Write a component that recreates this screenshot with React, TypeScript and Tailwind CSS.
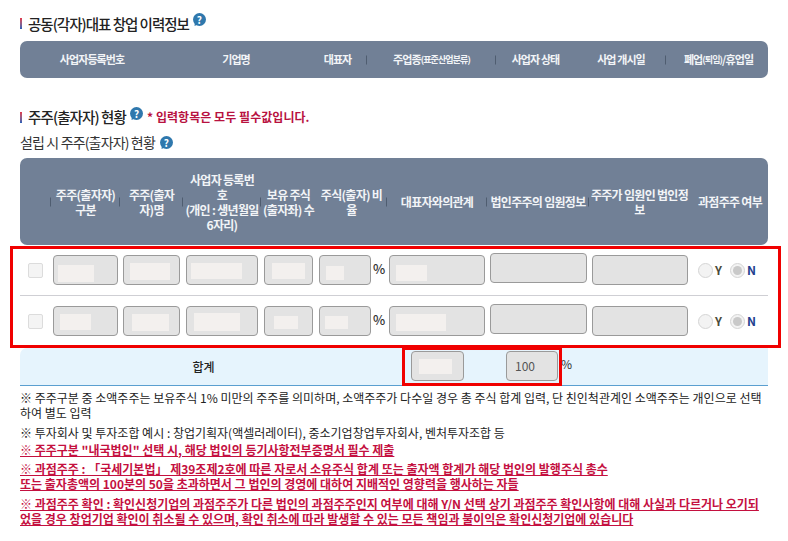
const font = { fontFamily: '"Noto Sans CJK KR", "Noto Sans", sans-serif' };

const HelpIcon = ({ className = "" }: { className?: string }) => (
  <span className={`relative inline-flex shrink-0 items-center justify-center w-[13px] h-[13px] rounded-full bg-[#2f78ad] text-[10px] leading-[13px] font-bold text-white ${className}`}>
    <svg className="absolute left-[1px] top-[8px]" width="5" height="5" viewBox="0 0 5 5">
      <path d="M1 0 L0.5 5 L5 3 Z" fill="#2f78ad" />
    </svg>
    <span className="relative">?</span>
  </span>
);

const TitleBar = () => (
  <span className="w-[2px] h-[11px] mr-[6px] shrink-0 bg-gradient-to-b from-[#e2344a] to-[#1f5fb8]" />
);

const Sep = () => <span className="absolute right-0 top-1/2 -translate-y-1/2 h-[9px] w-px bg-[#4f5d70]" />;

const topCols = [
  { label: "사업자등록번호", pad: "" },
  { label: "기업명", pad: "" },
  { label: "대표자", sep: true, pad: "" },
  { label: "주업종", small: "(표준산업분류)", sep: true, pad: "" },
  { label: "사업자 상태", pad: "pr-[5px]" },
  { label: "사업 개시일", sep: true, pad: "pr-[4px]" },
  { label: "폐업", small: "(퇴임)", rest: "/휴업일", pad: "pl-[1px]" },
];

const midCols: { label: React.ReactNode; sep?: boolean; pad: string }[] = [
  { label: "", sep: true, pad: "" },
  { label: "주주(출자자) 구분", sep: true, pad: "px-[3px]" },
  { label: "주주(출자자)명", sep: true, pad: "px-[3px]" },
  {
    label: (
      <>
        사업자 등록번
        <br />호<br />
        (개인 : 생년월일
        <br />
        6자리)
      </>
    ),
    sep: true,
    pad: "",
  },
  { label: "보유 주식 (출자좌) 수", pad: "" },
  { label: "주식(출자) 비율", sep: true, pad: "px-[3px]" },
  { label: "대표자와의관계", sep: true, pad: "px-[3px]" },
  { label: "법인주주의 임원정보", sep: true, pad: "px-[3px]" },
  {
    label: (
      <>
        주주가 임원인 법인정
        <br />보
      </>
    ),
    pad: "",
  },
  { label: "과점주주 여부", pad: "px-[3px]" },
];

const Box = ({ block, className = "" }: { block?: string; className?: string }) => (
  <div className={`h-[30px] shrink-0 rounded-[4px] border border-[#9a9a9a] bg-[#e3e3e3] flex items-center ${className}`}>
    {block && <span className={`block bg-[#f3f0ee] ${block}`} />}
  </div>
);

const Radio = ({ label, checked }: { label: string; checked?: boolean }) => (
  <span className="flex items-center gap-[2px]">
    <span className="w-[15px] h-[15px] rounded-full border border-[#d5d5d5] bg-[#f3f3f3] flex items-center justify-center">
      {checked && <span className="w-[9px] h-[9px] rounded-full bg-[#c9c9c9]" />}
    </span>
    <span className={`text-[12px] font-bold ${checked ? "text-[#1f3f8f]" : "text-[#4a4a3a]"}`}>{label}</span>
  </span>
);

const Row = ({ blocks }: { blocks: string[] }) => (
  <div className="flex items-start">
    <div className="w-[33px] shrink-0 pl-2 pt-2">
      <span className="block w-[15px] h-[15px] rounded-[2px] border border-[#dcdcdc] bg-[#f4f4f4]" />
    </div>
    <Box block={blocks[0]} className="w-[65px]" />
    <Box block={blocks[1]} className="w-[57px] ml-[5px]" />
    <Box block={blocks[2]} className="w-[72px] ml-[6px]" />
    <Box block={blocks[3]} className="w-[49px] ml-[6px]" />
    <Box block={blocks[4]} className="w-[52px] ml-[6px]" />
    <span className="w-[18px] shrink-0 pl-[2px] text-[13px] font-medium leading-[27px] text-[#333]">%</span>
    <Box block={blocks[5]} className="w-[96px]" />
    <Box className="w-[97px] ml-[5px] -mt-[2px]" />
    <Box className="w-[96px] ml-[5px]" />
    <div className="ml-[10px] flex items-center gap-[8px] h-[30px]">
      <Radio label="Y" />
      <Radio label="N" checked />
    </div>
  </div>
);

const Note = ({ children, className = "" }: { children: React.ReactNode; className?: string }) => (
  <p className={`text-[12px] leading-[15px] text-[#222] ${className}`}>{children}</p>
);

const RedNote = ({ children, className = "" }: { children: React.ReactNode; className?: string }) => (
  <p className={`text-[12px] leading-[15px] font-bold text-[#c4103f] underline ${className}`}>{children}</p>
);

export default function App() {
  return (
    <div className="relative w-[788px] h-[541px] overflow-hidden bg-white px-5 pt-[13px]" style={font}>
      <div className="flex items-center h-[21px]">
        <TitleBar />
        <h2 className="text-[14.5px] tracking-[-1px] font-medium text-[#222]">공동(각자)대표 창업 이력정보</h2>
        <HelpIcon className="ml-1 -mt-2" />
      </div>

      <div className="mt-[7px] h-[37px] rounded-[7px] bg-[#718096] grid grid-cols-[144px_144px_59px_129px_84px_86px_104px] items-center">
        {topCols.map((c) => (
          <div key={c.label} className={`relative h-full flex items-center justify-center text-[11px] font-bold tracking-[-0.9px] text-[#f2f4f7] ${c.pad}`}>
            {c.label}
            {c.small && <span className="text-[9px]">{c.small}</span>}
            {c.rest}
            {c.sep && <Sep />}
          </div>
        ))}
      </div>

      <div className="flex items-center h-[24px] mt-[27px]">
        <TitleBar />
        <h2 className="text-[14.5px] tracking-[-0.9px] font-medium text-[#222]">주주(출자자) 현황</h2>
        <HelpIcon className="ml-1 -mt-2" />
        <span className="ml-[4px] text-[12px] font-bold tracking-[0.05px] text-[#b8123f]">* 입력항목은 모두 필수값입니다.</span>
      </div>

      <div className="flex items-center h-[20px] mt-[3px]">
        <span className="text-[14px] tracking-[-0.85px] text-[#333]">설립 시 주주(출자자) 현황</span>
        <HelpIcon className="ml-[5px]" />
      </div>

      <div className="mt-[6px] h-[87px] rounded-[7px] bg-[#718096] grid grid-cols-[31px_69px_63px_78px_55px_71px_100px_102px_101px_80px] items-center">
        {midCols.map((c, i) => (
          <div key={i} className={`relative h-full flex items-center justify-center text-center text-[12px] leading-[15px] font-bold tracking-[-0.7px] text-[#f2f4f7] whitespace-normal ${c.pad}`}>
            <span>{c.label}</span>
            {c.sep && <Sep />}
          </div>
        ))}
      </div>

      <div className="h-[51px] border-b border-[#cfcfd4] pt-[10px]">
        <Row
          blocks={[
            "w-[36px] h-[17px] ml-[4px] mt-[7px]",
            "w-[40px] h-[17px] ml-[6px] mt-[3px]",
            "w-[51px] h-[16px] ml-[4px] mt-[2px]",
            "w-[33px] h-[16px] ml-[7px] mt-[2px]",
            "w-[18px] h-[14px] ml-[6px] mt-[6px]",
            "w-[31px] h-[16px] ml-[6px] mt-[6px]",
          ]}
        />
      </div>
      <div className="h-[52px] pt-[10px]">
        <Row
          blocks={[
            "w-[31px] h-[16px] ml-[6px] mt-[2px]",
            "w-[37px] h-[17px] ml-[8px] mt-[3px]",
            "w-[46px] h-[18px] ml-[7px] mt-[2px]",
            "w-[24px] h-[13px] ml-[9px] mt-[3px]",
            "w-[23px] h-[13px] ml-[5px] mt-[3px]",
            "w-[50px] h-[17px] ml-[6px] mt-[3px]",
          ]}
        />
      </div>

      <div className="h-[38px] rounded-tl-[7px] bg-[#e6f4fd] border-b border-[#5b9fd0] flex items-start">
        <div className="w-[367px] h-full flex items-center justify-center text-[12px] font-medium text-[#222]">합계</div>
        <div className="ml-[24px] mt-[3px] w-[53px] h-[30px] rounded-[4px] border border-[#9a9a9a] bg-[#e3e3e3] flex items-center">
          <span className="block ml-[7px] w-[33px] h-[15px] bg-[#f3f0ee]" />
        </div>
        <div className="ml-[42px] mt-[3px] w-[52px] h-[30px] rounded-[4px] border border-[#9a9a9a] bg-[#e3e3e3] flex items-center pl-2 text-[12px] text-[#555]">100</div>
        <span className="ml-[3px] mt-[7px] text-[12px] text-[#333]">%</span>
      </div>

      <div className="mt-[4px]">
        <Note>※ 주주구분 중 소액주주는 보유주식 1% 미만의 주주를 의미하며, 소액주주가 다수일 경우 총 주식 합계 입력, 단 친인척관계인 소액주주는 개인으로 선택하여 별도 입력</Note>
        <Note className="mt-[5px]">※ 투자회사 및 투자조합 예시 : 창업기획자(액셀러레이터), 중소기업창업투자회사, 벤처투자조합 등</Note>
        <RedNote className="mt-[2px]">※ 주주구분 "내국법인" 선택 시, 해당 법인의 등기사항전부증명서 필수 제출</RedNote>
        <RedNote className="mt-[4px]">
          ※ 과점주주 : 「국세기본법」 제39조제2호에 따른 자로서 소유주식 합계 또는 출자액 합계가 해당 법인의 발행주식 총수
          <br />
          또는 출자총액의 100분의 50을 초과하면서 그 법인의 경영에 대하여 지배적인 영향력을 행사하는 자들
        </RedNote>
        <RedNote className="mt-[5px]">※ 과점주주 확인 : 확인신청기업의 과점주주가 다른 법인의 과점주주인지 여부에 대해 Y/N 선택 상기 과점주주 확인사항에 대해 사실과 다르거나 오기되었을 경우 창업기업 확인이 취소될 수 있으며, 확인 취소에 따라 발생할 수 있는 모든 책임과 불이익은 확인신청기업에 있습니다</RedNote>
      </div>

      {/* 스크린샷 위 빨간 강조 박스 */}
      <div className="absolute left-[10px] top-[246px] w-[771px] h-[102px] border-[3px] border-[#f00000] pointer-events-none" />
      <div className="absolute left-[402px] top-[347px] w-[160px] h-[39px] border-[3px] border-[#f00000] pointer-events-none" />
    </div>
  );
}
